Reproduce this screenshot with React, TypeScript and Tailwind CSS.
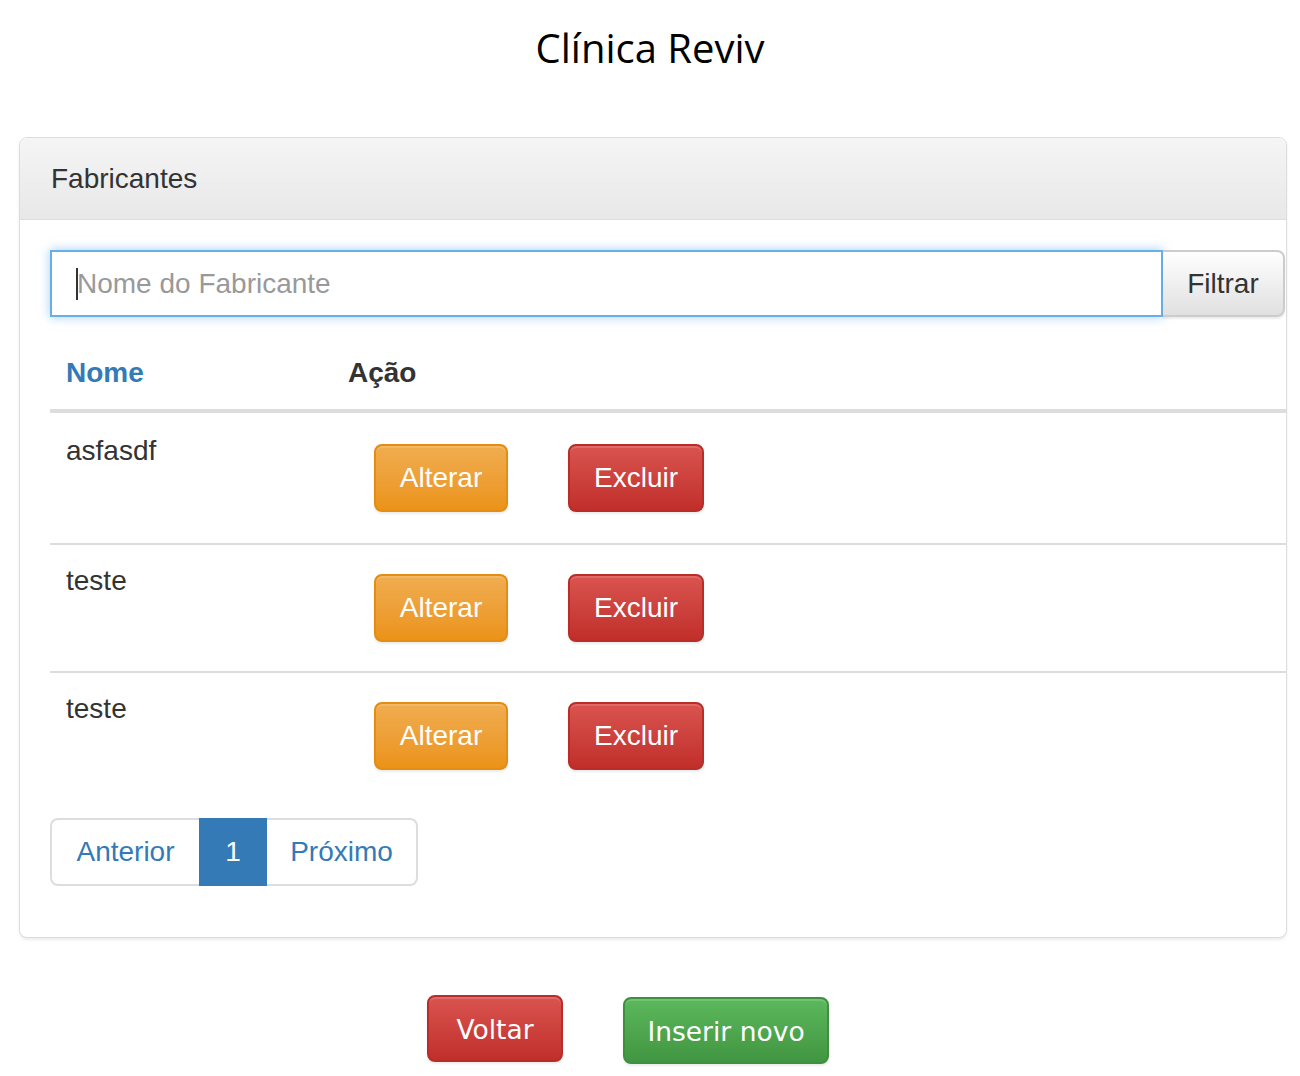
import React from "react";

type Row = { id: number; nome: string };

const rows: Row[] = [
  { id: 1, nome: "asfasdf" },
  { id: 2, nome: "teste" },
  { id: 3, nome: "teste" },
];

const btnShadow = "shadow-[inset_0_2px_0_rgba(255,255,255,0.15),0_2px_2px_rgba(0,0,0,0.075)]";

export default function App() {
  return (
    <div className="min-h-screen bg-white font-['Liberation_Sans',Arial,sans-serif] text-[#333] text-[28px]">
      {/* titulo */}
      <div className="pt-[22px] h-[137px]">
        <h1 className="text-center text-[40px] leading-[52px] text-black font-['Open_Sans',sans-serif]">
          Clínica Reviv
        </h1>
      </div>

      {/* painel */}
      <div className="ml-[19px] w-[1268px] border border-[#ddd] rounded-[8px] shadow-[0_2px_3px_rgba(0,0,0,0.08)] bg-white">
        <div className="h-[82px] flex items-center pl-[31px] bg-gradient-to-b from-[#f5f5f5] to-[#e8e8e8] border-b border-[#ddd] rounded-t-[8px]">
          Fabricantes
        </div>

        <div className="pl-[30px] pt-[30px] pb-[51px]">
          <div className="flex h-[67px] pr-[1px]">
            <div className="flex-1 flex items-center border-2 border-[#66afe9] shadow-[0_0_10px_rgba(102,175,233,0.6)] pl-[24px]">
              <span className="w-[2px] h-[32px] bg-[#333]" />
              <input
                className="flex-1 -ml-[1px] outline-none bg-transparent placeholder:text-[#999]"
                placeholder="Nome do Fabricante"
              />
            </div>
            <button className="w-[122px] border-2 border-l-0 border-[#ccc] rounded-r-[8px] bg-gradient-to-b from-white to-[#e0e0e0] text-[#333] shadow-[0_2px_2px_rgba(0,0,0,0.075)]">
              Filtrar
            </button>
          </div>

          <div className="mt-[19px]">
            <div className="flex items-center h-[77px] border-b-4 border-[#ddd] font-bold">
              <div className="w-[298px] pl-[16px] text-[#337ab7]">Nome</div>
              <div>Ação</div>
            </div>
            {rows.map((r, i) => (
              <div
                key={r.id}
                className={
                  i === 0
                    ? "flex h-[130px]"
                    : "flex h-[128px] border-t-2 border-[#ddd]"
                }
              >
                <div
                  className={
                    i === 0
                      ? "w-[298px] pl-[16px] pt-[18px] leading-[40px]"
                      : "w-[298px] pl-[16px] pt-[16px] leading-[40px]"
                  }
                >
                  {r.nome}
                </div>
                <div
                  className={
                    i === 0
                      ? "flex gap-[60px] pl-[26px] pt-[31px]"
                      : "flex gap-[60px] pl-[26px] pt-[29px]"
                  }
                >
                  <button
                    className={`w-[134px] h-[68px] rounded-[8px] border-2 border-[#e38d13] bg-gradient-to-b from-[#f0ad4e] to-[#eb9316] text-white ${btnShadow}`}
                  >
                    Alterar
                  </button>
                  <button
                    className={`w-[136px] h-[68px] rounded-[8px] border-2 border-[#b92c28] bg-gradient-to-b from-[#d9534f] to-[#c12e2a] text-white ${btnShadow}`}
                  >
                    Excluir
                  </button>
                </div>
              </div>
            ))}
          </div>

          <div className="mt-[19px] flex h-[68px] w-fit">
            <button className="w-[149px] border-2 border-r-0 border-[#ddd] rounded-l-[8px] text-[#337ab7]">
              Anterior
            </button>
            <button className="w-[68px] bg-[#337ab7] text-white">1</button>
            <button className="w-[151px] border-2 border-l-0 border-[#ddd] rounded-r-[8px] text-[#337ab7]">
              Próximo
            </button>
          </div>
        </div>
      </div>

      {/* botoes */}
      <div className="mt-[57px] flex justify-center items-start gap-[60px] pr-[44px] font-['DejaVu_Sans',sans-serif] text-[26.5px]">
        <button className={`w-[136px] h-[67px] pt-[3px] rounded-[8px] border-2 border-[#b92c28] bg-gradient-to-b from-[#d9534f] to-[#c12e2a] text-white ${btnShadow}`}>
          Voltar
        </button>
        <button className={`mt-[2px] w-[206px] h-[67px] pt-[3px] rounded-[8px] border-2 border-[#3e8f3e] bg-gradient-to-b from-[#5cb85c] to-[#419641] text-white ${btnShadow}`}>
          Inserir novo
        </button>
      </div>
    </div>
  );
}
